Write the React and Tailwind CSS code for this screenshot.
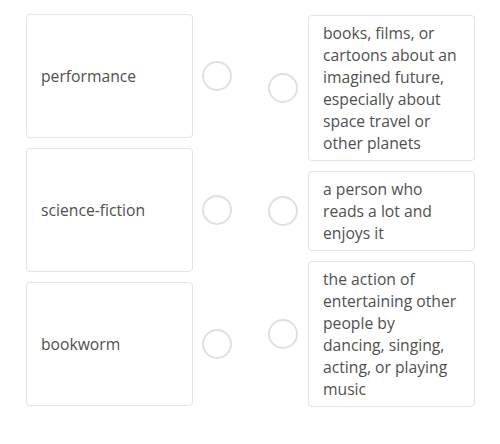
import React from "react";

const terms = ["performance", "science-fiction", "bookworm"];

const definitions = [
  "books, films, or cartoons about an imagined future, especially about space travel or other planets",
  "a person who reads a lot and enjoys it",
  "the action of entertaining other people by dancing, singing, acting, or playing music",
];

const Dot = () => (
  <div className="w-[30px] h-[30px] shrink-0 rounded-full border-[2.5px] border-[#e0e0e0] bg-white" />
);

const App = () => {
  return (
    <div
      className="w-[500px] h-[444px] bg-white text-[#505050] text-[15.7px] leading-[22px]"
      style={{ fontFamily: '"Open Sans", "Liberation Sans", sans-serif' }}
    >
      <div className="flex pl-[26px] pt-[14px]">
        <div className="flex flex-col gap-[10px]">
          {terms.map((t) => (
            <div key={t} className="flex items-center">
              <div className="w-[167px] h-[124px] flex items-center px-[14px] border border-[#e3e3e3] rounded-[4px]">
                {t}
              </div>
              <div className="ml-[9px]">
                <Dot />
              </div>
            </div>
          ))}
        </div>
        <div className="flex flex-col gap-[10px] ml-[36px] pt-[1px]">
          {definitions.map((d) => (
            <div key={d} className="flex items-center">
              <Dot />
              <div className="ml-[10px] w-[167px] pl-[14px] pr-[16px] py-[6px] border border-[#e3e3e3] rounded-[4px]">
                {d}
              </div>
            </div>
          ))}
        </div>
      </div>
    </div>
  );
};

export default App;
